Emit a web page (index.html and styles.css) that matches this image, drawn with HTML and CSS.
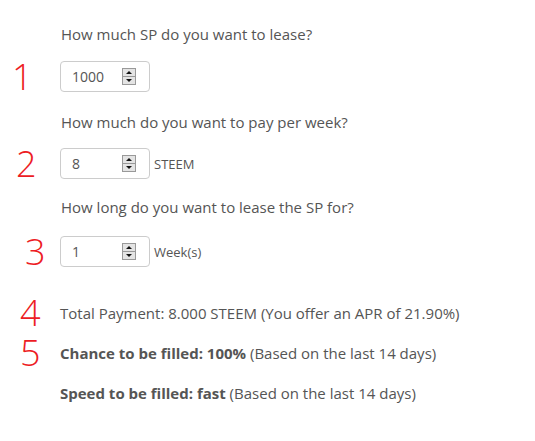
FILE: index.html
```html
<!DOCTYPE html>
<html>
<head>
<meta charset="utf-8">
<link rel="stylesheet" href="styles.css">
</head>
<body>
<div class="form">
  <p class="q q1">How much SP do you want to lease?</p>
  <div class="row r1">
    <span class="num n1">1</span>
    <div class="field"><span class="val">1000</span><span class="spin"><i class="up"></i><i class="down"></i></span></div>
  </div>
  <p class="q q2">How much do you want to pay per week?</p>
  <div class="row r2">
    <span class="num n2">2</span>
    <div class="field"><span class="val">8</span><span class="spin"><i class="up"></i><i class="down"></i></span></div>
    <span class="unit">STEEM</span>
  </div>
  <p class="q q3">How long do you want to lease the SP for?</p>
  <div class="row r3">
    <span class="num n3">3</span>
    <div class="field"><span class="val">1</span><span class="spin"><i class="up"></i><i class="down"></i></span></div>
    <span class="unit">Week(s)</span>
  </div>
  <div class="row info i4">
    <span class="num n4">4</span>
    <span class="txt">Total Payment: 8.000 STEEM (You offer an APR of 21.90%)</span>
  </div>
  <div class="row info i5">
    <span class="num n5">5</span>
    <span class="txt"><b>Chance to be filled: 100%</b> (Based on the last 14 days)</span>
  </div>
  <div class="row info i6">
    <span class="num"></span>
    <span class="txt"><b>Speed to be filled: fast</b> (Based on the last 14 days)</span>
  </div>
</div>
</body>
</html>
```
FILE: styles.css
```css
html, body {
  margin: 0;
  padding: 0;
  background: #fff;
}
body {
  font-family: "Open Sans", "Segoe UI", sans-serif;
  font-size: 15px;
  color: #555;
}
.form {
  padding-top: 24px;
}
.q {
  margin: 0;
  padding-left: 61px;
  line-height: 20px;
}
.q2 { margin-top: 20px; }
.q3 { margin-top: 18px; }
.row {
  display: flex;
  align-items: center;
}
.r1 { margin-top: 17px; }
.r2 { margin-top: 16px; }
.r3 { margin-top: 19px; }
.num {
  width: 60px;
  flex: none;
  box-sizing: border-box;
  color: #ed1c24;
  font-size: 36px;
  font-weight: 300;
  line-height: 31px;
  height: 31px;
}
.n1 { padding-left: 12px; }
.n2 { padding-left: 16px; }
.n3 { padding-left: 25px; }
.n4 { padding-left: 20px; }
.n5 { padding-left: 20px; }
.field {
  box-sizing: border-box;
  width: 90px;
  height: 31px;
  border: 1px solid #ccc;
  border-radius: 4px;
  display: flex;
  align-items: center;
  padding-left: 11px;
  padding-right: 13px;
}
.val {
  flex: 1;
  font-size: 14px;
  color: #555;
}
.spin {
  width: 14px;
  height: 17px;
  border: 1px solid #999;
  background: #e4e4e4;
  display: flex;
  flex-direction: column;
  box-sizing: border-box;
}
.spin i {
  flex: 1;
  display: flex;
  align-items: center;
  justify-content: center;
}
.spin .up { border-bottom: 1px solid #999; }
.spin i::after {
  content: "";
  width: 0;
  height: 0;
  border-left: 3px solid transparent;
  border-right: 3px solid transparent;
}
.spin .up::after { border-bottom: 3px solid #111; }
.spin .down::after { border-top: 3px solid #111; }
.unit {
  margin-left: 4px;
  font-size: 13px;
}
.info .txt { line-height: 20px; }
.info .num {
  height: 20px;
  line-height: 20px;
}
.i4 { margin-top: 36px; }
.i5 { margin-top: 20px; }
.i6 { margin-top: 20px; }
b { font-weight: 700; }
```
